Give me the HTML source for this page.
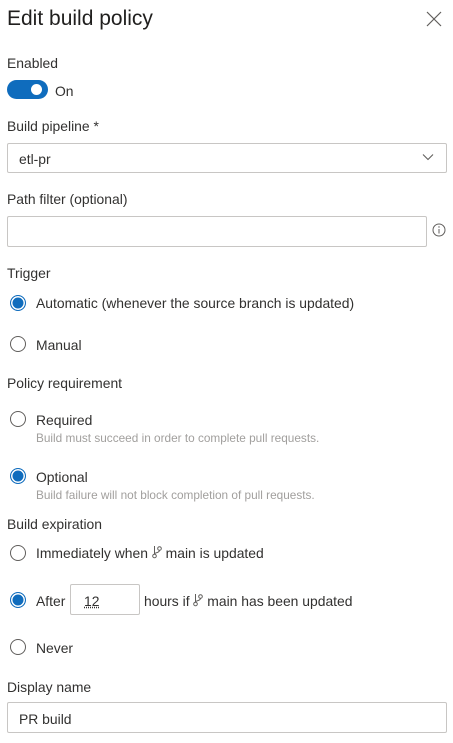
<!DOCTYPE html>
<html><head><meta charset="utf-8"><style>
*{margin:0;padding:0;box-sizing:border-box}
body{width:453px;height:743px;background:#fff;font-family:"Liberation Sans",sans-serif;color:#323130;position:relative;overflow:hidden;font-size:13.9px}
.a{position:absolute;white-space:nowrap;line-height:16px}
.lbl{left:7px}
.r{position:absolute;left:10px;width:16px;height:16px;border:1px solid #605e5c;border-radius:50%}
.r.on{background:#0f6cbd;box-shadow:inset 0 0 0 1.5px #fff;border:1.5px solid #0f6cbd}
.t{left:36px}
.d{left:36px;font-size:11.8px;color:#a19f9d}
.box{position:absolute;border:1px solid #c8c6c4;border-radius:2px;background:#fff}
</style></head><body>
<div class="a" style="left:7px;top:7px;font-size:21px;line-height:24px;color:#201f1e">Edit build policy</div>
<svg class="a" style="left:426px;top:11px" width="16" height="16" viewBox="0 0 16 16"><path d="M1 1L15 15M15 1L1 15" stroke="#605e5c" stroke-width="1.2"/></svg>
<div class="a lbl" style="top:55px">Enabled</div>
<div class="a" style="left:7px;top:80px;width:41px;height:19px;border-radius:10px;background:#0f6cbd"></div>
<div class="a" style="left:31px;top:84px;width:11px;height:11px;border-radius:50%;background:#fff"></div>
<div class="a" style="left:55px;top:83px">On</div>
<div class="a lbl" style="top:118px">Build pipeline *</div>
<div class="box" style="left:7px;top:143px;width:440px;height:30px"></div>
<div class="a" style="left:19px;top:151px">etl-pr</div>
<svg class="a" style="left:422px;top:153px" width="12" height="8" viewBox="0 0 12 8"><path d="M1 1.5L6 6.5L11 1.5" fill="none" stroke="#605e5c" stroke-width="1.1"/></svg>
<div class="a lbl" style="top:191px">Path filter (optional)</div>
<div class="box" style="left:7px;top:216px;width:420px;height:31px"></div>
<svg class="a" style="left:432px;top:223px" width="14" height="14" viewBox="0 0 14 14"><circle cx="7" cy="7" r="6" fill="none" stroke="#605e5c"/><path d="M7 6v4.5" stroke="#605e5c"/><circle cx="7" cy="4" r=".7" fill="#605e5c"/></svg>
<div class="a lbl" style="top:265px">Trigger</div>
<div class="r on" style="top:295px"></div><div class="a t" style="top:295px">Automatic (whenever the source branch is updated)</div>
<div class="r" style="top:336px"></div><div class="a t" style="top:337px">Manual</div>
<div class="a lbl" style="top:375px">Policy requirement</div>
<div class="r" style="top:411px"></div><div class="a t" style="top:412px">Required</div>
<div class="a d" style="top:430px">Build must succeed in order to complete pull requests.</div>
<div class="r on" style="top:468px"></div><div class="a t" style="top:469px">Optional</div>
<div class="a d" style="top:487px">Build failure will not block completion of pull requests.</div>
<div class="a lbl" style="top:516px">Build expiration</div>
<div class="r" style="top:545px"></div><div class="a t" style="top:545px">Immediately when <svg width="10" height="14" viewBox="0 0 10 14" style="vertical-align:-1px"><circle cx="2.5" cy="11" r="1.8" fill="none" stroke="#605e5c"/><circle cx="7.5" cy="3.5" r="1.8" fill="none" stroke="#605e5c"/><path d="M2.5 1v8M7.5 5.3c0 3-5 2-5 3.7" fill="none" stroke="#605e5c"/></svg> main is updated</div>
<div class="r on" style="top:592px"></div><div class="a t" style="top:593px">After</div>
<div class="box" style="left:70px;top:584px;width:70px;height:31px"></div>
<div class="a" style="left:84px;top:593px;text-decoration:underline dotted">12</div>
<div class="a" style="left:144px;top:593px">hours if <svg width="10" height="14" viewBox="0 0 10 14" style="vertical-align:-1px"><circle cx="2.5" cy="11" r="1.8" fill="none" stroke="#605e5c"/><circle cx="7.5" cy="3.5" r="1.8" fill="none" stroke="#605e5c"/><path d="M2.5 1v8M7.5 5.3c0 3-5 2-5 3.7" fill="none" stroke="#605e5c"/></svg> main has been updated</div>
<div class="r" style="top:639px"></div><div class="a t" style="top:640px">Never</div>
<div class="a lbl" style="top:679px">Display name</div>
<div class="box" style="left:7px;top:702px;width:440px;height:31px"></div>
<div class="a" style="left:19px;top:711px">PR build</div>
</body></html>
